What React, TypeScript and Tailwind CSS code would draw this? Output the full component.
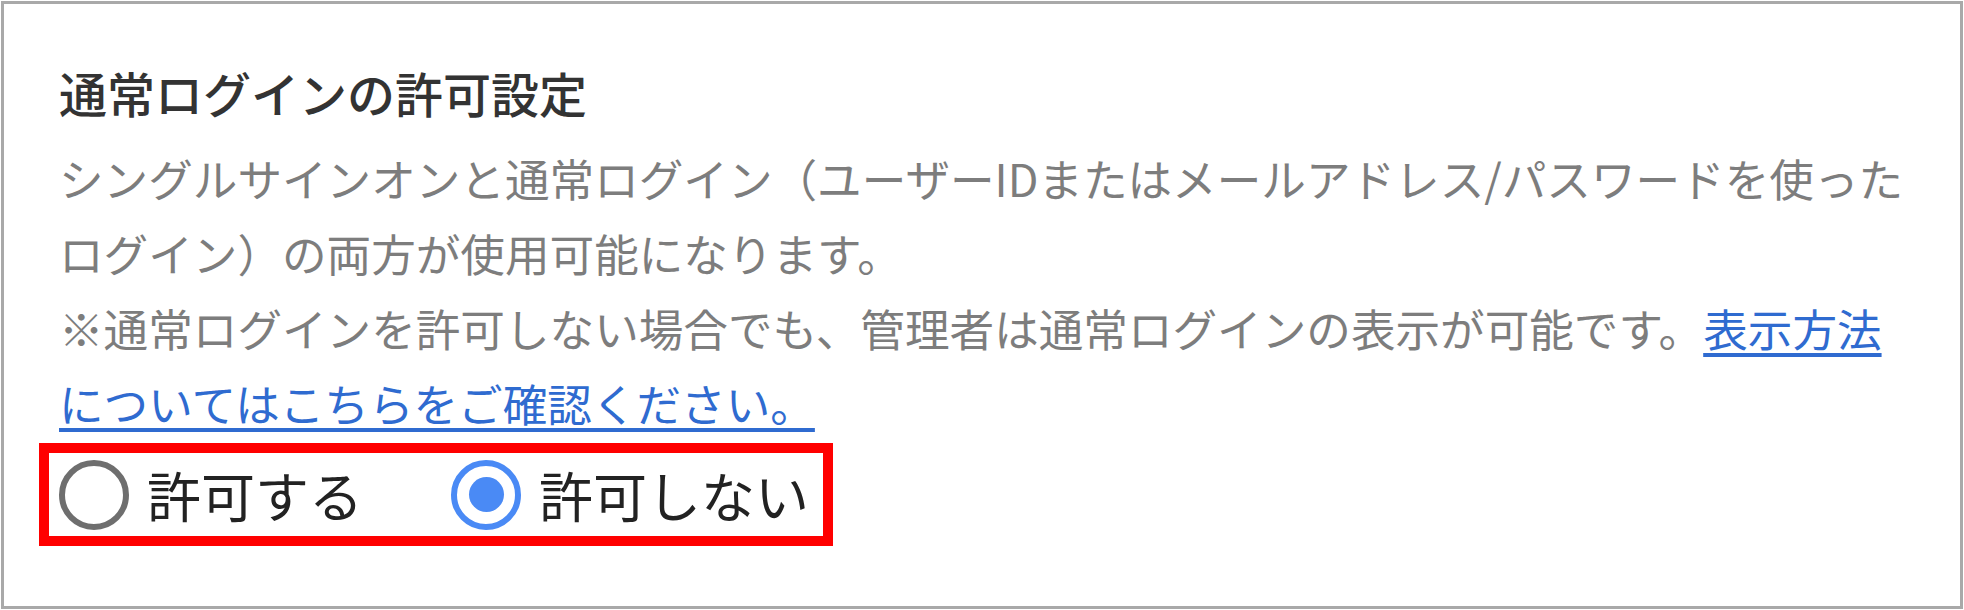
import React from "react";

const font = { fontFamily: '"Noto Sans CJK JP", "Noto Sans", sans-serif' };

function Radio({ checked }: { checked?: boolean }) {
  if (checked) {
    return (
      <span className="flex h-[70px] w-[70px] shrink-0 items-center justify-center rounded-full border-[6px] border-[#4a8af5] bg-white">
        <span className="h-[35px] w-[35px] rounded-full bg-[#4a8af5]" />
      </span>
    );
  }
  return <span className="h-[70px] w-[70px] shrink-0 rounded-full border-[6px] border-[#6e6e6e] bg-white" />;
}

export default function App() {
  return (
    <div className="h-[610px] w-full bg-white p-px" style={font}>
      <div className="h-full border-[3px] border-[#a9a9a9] pl-[35px] pt-[52px]">
        <h2 className="pl-[20px] text-[48px] font-medium leading-[72px] text-[#333333]">
          通常ログインの許可設定
        </h2>

        <p className="mt-[12px] whitespace-nowrap pl-[20px] text-[44.6px] leading-[75px] text-[#7d7d7d]">
          シングルサインオンと通常ログイン（ユーザーIDまたはメールアドレス/パスワードを使った
          <br />
          ログイン）の両方が使用可能になります。
          <br />
          ※通常ログインを許可しない場合でも、管理者は通常ログインの表示が可能です。
          <a href="#" className="text-[#2f6bd0] underline underline-offset-[6px]">
            表示方法
            <br />
            についてはこちらをご確認ください。
          </a>
        </p>

        <div className="mt-[3px] inline-flex h-[103px] items-center border-[10px] border-[#ff0000] pl-[10px] pr-[14px]">
          <label className="flex items-center gap-[18px]">
            <Radio />
            <span className="text-[54px] leading-none text-[#222222]">許可する</span>
          </label>
          <label className="ml-[88px] flex items-center gap-[18px]">
            <Radio checked />
            <span className="text-[54px] leading-none text-[#222222]">許可しない</span>
          </label>
        </div>
      </div>
    </div>
  );
}
